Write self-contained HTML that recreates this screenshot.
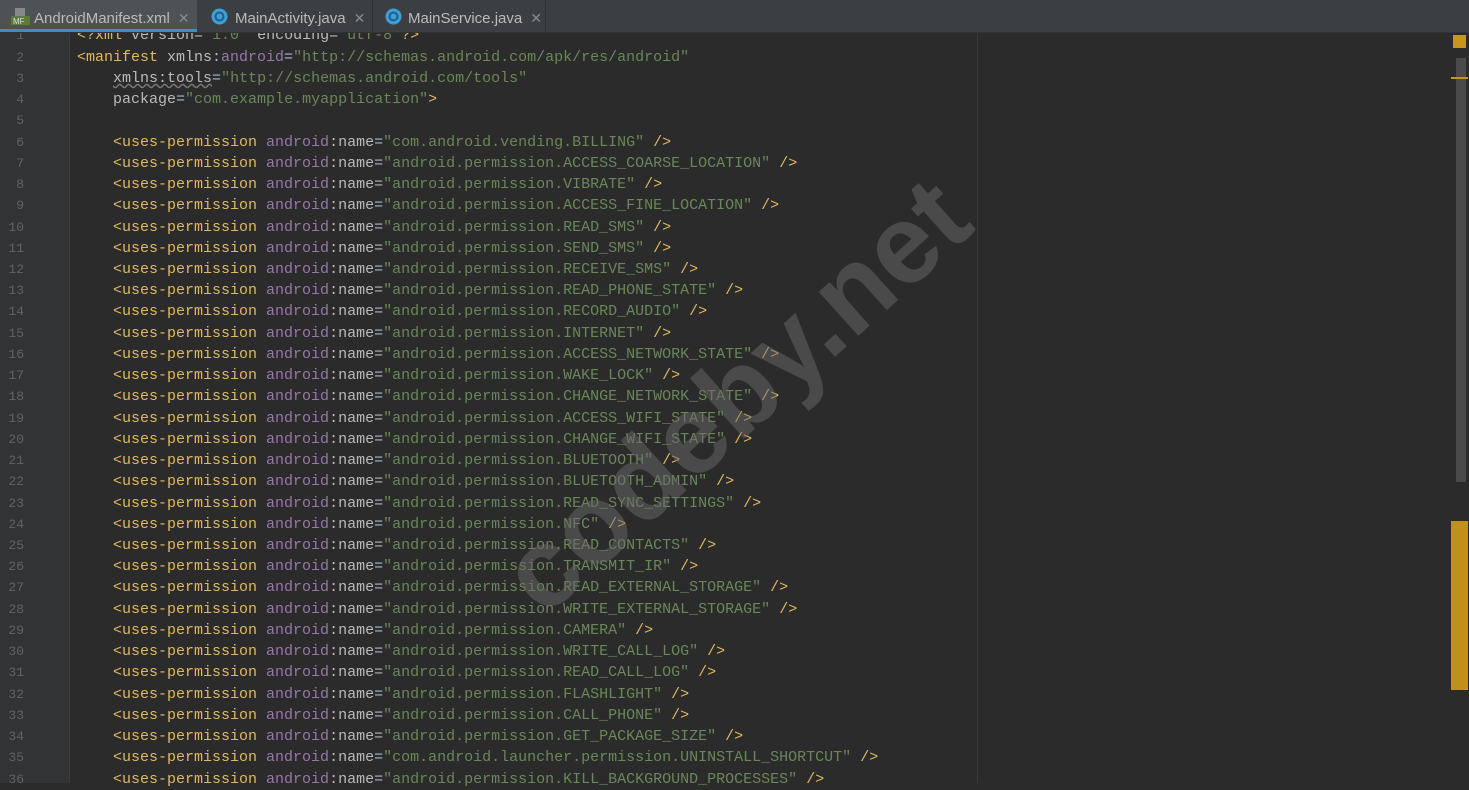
<!DOCTYPE html>
<html><head><meta charset="utf-8"><style>
body{margin:0;width:1469px;height:783px;overflow:hidden;background:#2b2b2b;position:relative;font-family:"Liberation Sans",sans-serif}
.tabs{position:absolute;left:0;top:0;width:1469px;height:32px;background:#3c3f41;border-bottom:1px solid #323232;z-index:3}
.tab{position:absolute;top:0;height:32px;color:#bbbbbb;font-size:15px;line-height:36px;box-sizing:border-box}
.tab .x{color:#8a8a8a;margin-left:8px;font-size:14px}
.gut{position:absolute;left:0;top:32px;width:69px;height:751px;background:#313335;border-right:1px solid #3d3d3d}
.code{position:absolute;left:0;top:25.4px;font-family:"Liberation Mono",monospace;font-size:15px;line-height:21.23px;white-space:pre;color:#a9b7c6}
.ln{position:absolute;left:0;width:24px;text-align:right;color:#606366;font-size:13px}
.t{color:#e0b862}.a{color:#9876aa}.n{color:#bababa}.s{color:#6a8759}.p{color:#bababa}
.wm{position:absolute;left:735px;top:395px;font:bold 112px "Liberation Sans",sans-serif;color:rgba(105,105,105,.5);transform:translate(-50%,-50%) rotate(-42deg);white-space:nowrap;z-index:2}
</style></head><body>
<div class="tabs">
 <div class="tab" style="left:0;width:197px;background:#4e5254;border-bottom:3px solid #3592c4;padding-left:34px;line-height:36px">AndroidManifest.xml<span class="x">✕</span>
  <svg style="position:absolute;left:11px;top:8px" width="20" height="18"><rect x="4" y="0" width="10" height="8" fill="#888"/><rect x="0" y="8" width="19" height="9" fill="#5c7a3a"/><text x="2" y="16" font-size="8" fill="#e0e0e0" font-family="Liberation Sans">MF</text></svg></div>
 <div class="tab" style="left:199px;width:174px;padding-left:36px;border-right:1px solid #2f3133">MainActivity.java<span class="x">✕</span>
  <svg style="position:absolute;left:12px;top:8px" width="17" height="17"><circle cx="8.5" cy="8.5" r="8" fill="#3e9fd8"/><circle cx="8.5" cy="8.5" r="4" fill="none" stroke="#1b5f8a" stroke-width="2"/></svg></div>
 <div class="tab" style="left:374px;width:172px;padding-left:34px;border-right:1px solid #2f3133">MainService.java<span class="x">✕</span>
  <svg style="position:absolute;left:11px;top:8px" width="17" height="17"><circle cx="8.5" cy="8.5" r="8" fill="#3e9fd8"/><circle cx="8.5" cy="8.5" r="4" fill="none" stroke="#1b5f8a" stroke-width="2"/></svg></div>
</div>
<div class="gut"></div>
<div style="position:absolute;left:977px;top:32px;width:1px;height:751px;background:#3a3a3a"></div>
<div style="position:absolute;left:1453px;top:35px;width:13px;height:13px;background:#c8961c"></div>
<div style="position:absolute;left:1456px;top:58px;width:10px;height:424px;background:#4a4a4a"></div>
<div style="position:absolute;left:1451px;top:77px;width:17px;height:2px;background:#c8961c"></div>
<div style="position:absolute;left:1451px;top:521px;width:17px;height:169px;background:#bf9119"></div>
<div class="code" id="c"></div>
<div class="wm">codeby.net</div>
<script>
var perms=["com.android.vending.BILLING","android.permission.ACCESS_COARSE_LOCATION","android.permission.VIBRATE","android.permission.ACCESS_FINE_LOCATION","android.permission.READ_SMS","android.permission.SEND_SMS","android.permission.RECEIVE_SMS","android.permission.READ_PHONE_STATE","android.permission.RECORD_AUDIO","android.permission.INTERNET","android.permission.ACCESS_NETWORK_STATE","android.permission.WAKE_LOCK","android.permission.CHANGE_NETWORK_STATE","android.permission.ACCESS_WIFI_STATE","android.permission.CHANGE_WIFI_STATE","android.permission.BLUETOOTH","android.permission.BLUETOOTH_ADMIN","android.permission.READ_SYNC_SETTINGS","android.permission.NFC","android.permission.READ_CONTACTS","android.permission.TRANSMIT_IR","android.permission.READ_EXTERNAL_STORAGE","android.permission.WRITE_EXTERNAL_STORAGE","android.permission.CAMERA","android.permission.WRITE_CALL_LOG","android.permission.READ_CALL_LOG","android.permission.FLASHLIGHT","android.permission.CALL_PHONE","android.permission.GET_PACKAGE_SIZE","com.android.launcher.permission.UNINSTALL_SHORTCUT","android.permission.KILL_BACKGROUND_PROCESSES"];
var L=['<span class="t">&lt;?xml </span><span class="n">version</span>=<span class="s">"1.0"</span> <span class="n">encoding</span>=<span class="s">"utf-8"</span><span class="t">?&gt;</span>',
'<span class="t">&lt;manifest </span><span class="n">xmlns:</span><span class="a">android</span>=<span class="s">"http://schemas.android.com/apk/res/android"</span>',
'    <span class="n" style="text-decoration:underline wavy #777">xmlns:tools</span>=<span class="s">"http://schemas.android.com/tools"</span>',
'    <span class="n">package</span>=<span class="s">"com.example.myapplication"</span><span class="t">&gt;</span>',''];
perms.forEach(function(p){L.push('    <span class="t">&lt;uses-permission </span><span class="a">android</span><span class="n">:name</span>=<span class="s">"'+p+'"</span> <span class="t">/&gt;</span>')});
var h='';L.forEach(function(l,i){h+='<div style="position:relative"><span class="ln">'+(i+1)+'</span><span style="position:absolute;left:77px">'+l+'</span>&nbsp;</div>'});
document.getElementById('c').innerHTML=h;
</script>
</body></html>
